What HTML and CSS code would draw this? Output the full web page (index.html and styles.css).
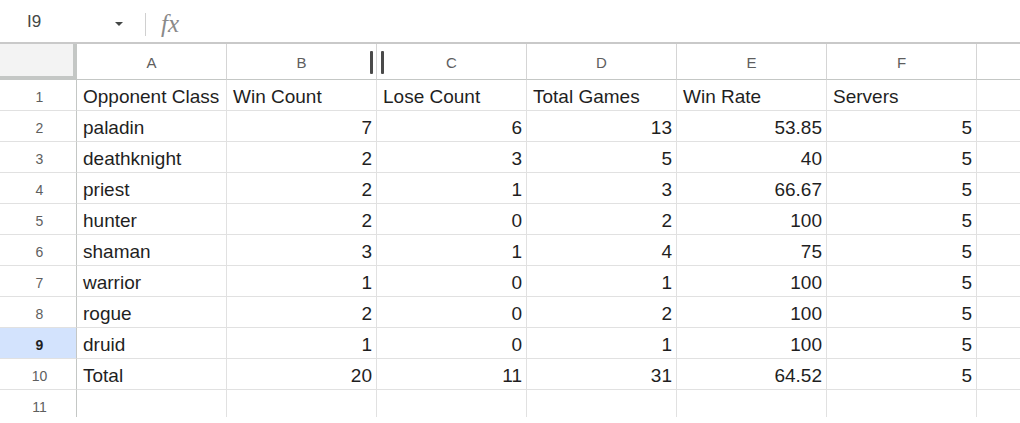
FILE: index.html
```html
<!DOCTYPE html>
<html>
<head>
<meta charset="utf-8">
<link rel="stylesheet" href="styles.css">
</head>
<body>
<div class="formula-bar">
  <span class="name-box">I9</span>
  <span class="caret"></span>
  <span class="divider"></span>
  <span class="fx">fx</span>
</div>
<div class="sheet">
  <div class="row col-head">
    <div class="corner"></div>
    <div class="ch">A</div>
    <div class="ch resizable">B<span class="handle"><i></i><i></i></span></div>
    <div class="ch">C</div>
    <div class="ch">D</div>
    <div class="ch">E</div>
    <div class="ch">F</div>
    <div class="ch fill"></div>
  </div>
  <div class="row">
    <div class="rh">1</div>
    <div class="c">Opponent Class</div><div class="c">Win Count</div><div class="c">Lose Count</div><div class="c">Total Games</div><div class="c">Win Rate</div><div class="c">Servers</div><div class="c fill"></div>
  </div>
  <div class="row">
    <div class="rh">2</div>
    <div class="c">paladin</div><div class="c n">7</div><div class="c n">6</div><div class="c n">13</div><div class="c n">53.85</div><div class="c n">5</div><div class="c fill"></div>
  </div>
  <div class="row">
    <div class="rh">3</div>
    <div class="c">deathknight</div><div class="c n">2</div><div class="c n">3</div><div class="c n">5</div><div class="c n">40</div><div class="c n">5</div><div class="c fill"></div>
  </div>
  <div class="row">
    <div class="rh">4</div>
    <div class="c">priest</div><div class="c n">2</div><div class="c n">1</div><div class="c n">3</div><div class="c n">66.67</div><div class="c n">5</div><div class="c fill"></div>
  </div>
  <div class="row">
    <div class="rh">5</div>
    <div class="c">hunter</div><div class="c n">2</div><div class="c n">0</div><div class="c n">2</div><div class="c n">100</div><div class="c n">5</div><div class="c fill"></div>
  </div>
  <div class="row">
    <div class="rh">6</div>
    <div class="c">shaman</div><div class="c n">3</div><div class="c n">1</div><div class="c n">4</div><div class="c n">75</div><div class="c n">5</div><div class="c fill"></div>
  </div>
  <div class="row">
    <div class="rh">7</div>
    <div class="c">warrior</div><div class="c n">1</div><div class="c n">0</div><div class="c n">1</div><div class="c n">100</div><div class="c n">5</div><div class="c fill"></div>
  </div>
  <div class="row">
    <div class="rh">8</div>
    <div class="c">rogue</div><div class="c n">2</div><div class="c n">0</div><div class="c n">2</div><div class="c n">100</div><div class="c n">5</div><div class="c fill"></div>
  </div>
  <div class="row">
    <div class="rh selected">9</div>
    <div class="c">druid</div><div class="c n">1</div><div class="c n">0</div><div class="c n">1</div><div class="c n">100</div><div class="c n">5</div><div class="c fill"></div>
  </div>
  <div class="row">
    <div class="rh">10</div>
    <div class="c">Total</div><div class="c n">20</div><div class="c n">11</div><div class="c n">31</div><div class="c n">64.52</div><div class="c n">5</div><div class="c fill"></div>
  </div>
  <div class="row">
    <div class="rh">11</div>
    <div class="c"></div><div class="c"></div><div class="c"></div><div class="c"></div><div class="c"></div><div class="c"></div><div class="c fill"></div>
  </div>
</div>
</body>
</html>
```

FILE: styles.css
```css
html, body {
  margin: 0;
  padding: 0;
  background: #ffffff;
}

body {
  font-family: "Liberation Sans", Arial, sans-serif;
  color: #1f1f1f;
  width: 1020px;
  height: 423px;
  overflow: hidden;
}

.formula-bar {
  height: 42px;
  border-bottom: 2px solid #c9c9c9;
  display: flex;
  align-items: center;
}

.name-box {
  font-size: 17px;
  color: #444746;
  margin-left: 27px;
  margin-top: 2px;
  width: 88px;
}

.caret {
  width: 0;
  height: 0;
  border-left: 4px solid transparent;
  border-right: 4px solid transparent;
  border-top: 4px solid #444746;
  margin-top: 6px;
}

.divider {
  width: 1px;
  height: 23px;
  background: #d0d0d0;
  margin-left: 22px;
  margin-top: 7px;
}

.fx {
  font-family: "Liberation Serif", "Times New Roman", serif;
  font-style: italic;
  font-size: 25px;
  color: #8a8a8a;
  margin-left: 15px;
  margin-top: 6px;
  letter-spacing: 0;
}

.sheet {
  height: 373px;
  overflow: hidden;
}

.row {
  display: flex;
  height: 31px;
}

.col-head {
  height: 36px;
}

.corner {
  width: 73px;
  height: 32px;
  flex: none;
  background: #f3f3f3;
  border-right: 4px solid #c4c7c5;
  border-bottom: 4px solid #c4c7c5;
}

.ch {
  width: 150px;
  height: 36px;
  flex: none;
  box-sizing: border-box;
  border-right: 1px solid #d5d5d5;
  border-bottom: 1px solid #c4c7c5;
  display: flex;
  align-items: center;
  justify-content: center;
  font-size: 15px;
  color: #5e5e5e;
  padding-top: 1px;
}

.resizable {
  position: relative;
}

.handle {
  position: absolute;
  right: -8px;
  top: 7px;
  width: 14px;
  height: 23px;
  display: flex;
  justify-content: space-between;
  z-index: 2;
}

.handle i {
  display: block;
  width: 3px;
  height: 23px;
  background: #4a4a4a;
  border-radius: 1px;
}

.ch.fill {
  flex: 1;
  width: auto;
  border-right: none;
}

.rh {
  width: 77px;
  flex: none;
  box-sizing: border-box;
  border-right: 1px solid #c4c7c5;
  border-bottom: 1px solid #e1e1e1;
  display: flex;
  align-items: center;
  justify-content: center;
  font-size: 14px;
  color: #5e5e5e;
  padding-top: 3px;
  padding-left: 3px;
}

.rh.selected {
  background: #d3e3fd;
  color: #1f1f1f;
  font-weight: bold;
}

.c {
  width: 150px;
  flex: none;
  box-sizing: border-box;
  border-right: 1px solid #e1e1e1;
  border-bottom: 1px solid #e1e1e1;
  display: flex;
  align-items: flex-end;
  font-size: 19px;
  line-height: 22px;
  padding: 0 4px 2px 6px;
  white-space: nowrap;
  color: #1f1f1f;
}

.c.n {
  justify-content: flex-end;
}

.c.fill {
  flex: 1;
  width: auto;
  border-right: none;
}
```
